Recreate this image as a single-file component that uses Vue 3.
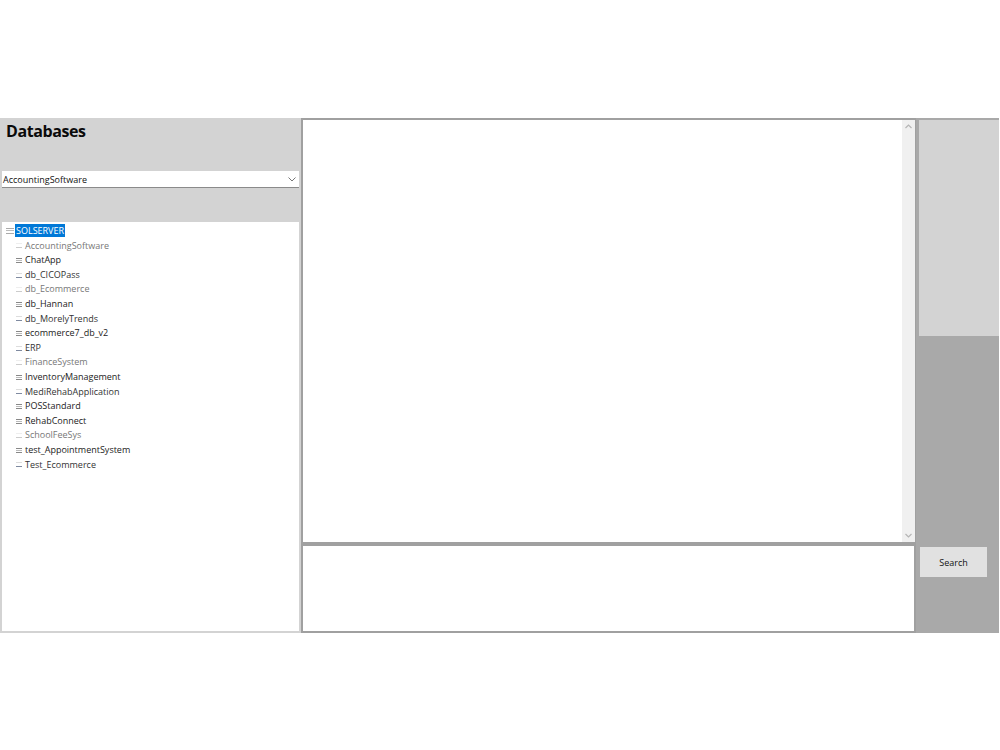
<script setup>
const rows = [
  { name: 'AccountingSoftware', tone: 'faint' },
  { name: 'ChatApp', tone: 'full' },
  { name: 'db_CICOPass', tone: 'low' },
  { name: 'db_Ecommerce', tone: 'faint' },
  { name: 'db_Hannan', tone: 'full' },
  { name: 'db_MorelyTrends', tone: 'low' },
  { name: 'ecommerce7_db_v2', tone: 'full' },
  { name: 'ERP', tone: 'low' },
  { name: 'FinanceSystem', tone: 'faint' },
  { name: 'InventoryManagement', tone: 'full' },
  { name: 'MediRehabApplication', tone: 'low' },
  { name: 'POSStandard', tone: 'full' },
  { name: 'RehabConnect', tone: 'full' },
  { name: 'SchoolFeeSys', tone: 'faint' },
  { name: 'test_AppointmentSystem', tone: 'full' },
  { name: 'Test_Ecommerce', tone: 'low' }
]
</script>

<template>
  <div class="page">
    <div class="window">
      <aside class="left">
        <h1 class="title">Databases</h1>
        <div class="combo">
          <span>AccountingSoftware</span>
          <svg class="chev" width="8" height="5" viewBox="0 0 8 5"><path d="M0.5 0.5L4 4L7.5 0.5" fill="none" stroke="#777" stroke-width="1" /></svg>
        </div>
        <div class="tree">
          <div class="row root">
            <span class="exp"></span>
            <span class="sel">SOLSERVER</span>
          </div>
          <div v-for="r in rows" :key="r.name" class="row child" :class="r.tone">
            <span class="exp"></span>
            <span class="label">{{ r.name }}</span>
          </div>
        </div>
      </aside>
      <main class="center">
        <div class="editor">
          <div class="editor-body"></div>
          <div class="scrollbar">
            <svg width="7" height="5" viewBox="0 0 7 5"><path d="M0.5 4L3.5 1L6.5 4" fill="none" stroke="#b5b5b5" stroke-width="1.2" /></svg>
            <svg width="7" height="5" viewBox="0 0 7 5"><path d="M0.5 1L3.5 4L6.5 1" fill="none" stroke="#b5b5b5" stroke-width="1.2" /></svg>
          </div>
        </div>
        <div class="query"></div>
      </main>
      <aside class="right">
        <div class="right-top"></div>
        <button class="search">Search</button>
      </aside>
    </div>
  </div>
</template>

<style scoped>
.page {
  width: 1000px;
  height: 750px;
  padding: 118px 1px 117px 0;
  box-sizing: border-box;
  background: #fff;
  font-family: "Open Sans", "Noto Sans", sans-serif;
  color: #111;
}
.window {
  display: flex;
  height: 515px;
  background: #a9a9a9;
}
.left {
  width: 301px;
  flex: none;
  box-sizing: border-box;
  padding: 0 2px 2px 2px;
  background: #d3d3d3;
  display: flex;
  flex-direction: column;
}
.title {
  margin: 0;
  padding: 4px 0 0 4px;
  height: 53px;
  box-sizing: border-box;
  font-size: 16px;
  line-height: 18px;
  font-weight: 700;
  letter-spacing: -0.4px;
  color: #0a0a0a;
}
.combo {
  height: 17px;
  box-sizing: border-box;
  background: #fff;
  border-bottom: 1px solid #8a8a8a;
  padding: 1px 3px 0 1px;
  display: flex;
  align-items: center;
  justify-content: space-between;
  font-size: 9px;
}
.tree {
  margin-top: 34px;
  flex: 1;
  background: #fff;
  padding-top: 1.5px;
}
.row {
  height: 14.6px;
  line-height: 14.6px;
  font-size: 9px;
  display: flex;
  align-items: center;
  white-space: nowrap;
}
.root {
  height: 15.1px;
  padding-left: 4px;
  align-items: flex-start;
}
.child {
  padding-left: 14px;
  color: #222;
}
.exp {
  width: 6px;
  height: 5px;
  margin-right: 3px;
  flex: none;
  box-sizing: border-box;
  border-top: 1px solid #888;
  border-bottom: 1px solid #888;
  background: linear-gradient(#bbb, #bbb) center / 100% 1px no-repeat;
}
.low .exp {
  border-top-color: #ddd;
  border-bottom-color: #7f8aa0;
  background: none;
}
.low .label {
  color: #333;
}
.faint .exp {
  border-top-color: #eee;
  border-bottom-color: #ccc;
  background: none;
}
.faint .label {
  color: #777;
}
.root .exp {
  margin-top: 4px;
  margin-right: 1px;
  width: 8px;
  height: 6px;
  border-color: #aaa;
}
.sel {
  margin-top: 0.5px;
  background: #0078d7;
  color: #fff;
  padding: 0 1px;
  line-height: 13px;
  height: 13px;
}
.center {
  width: 615px;
  flex: none;
  display: flex;
  flex-direction: column;
}
.editor {
  height: 426px;
  flex: none;
  box-sizing: border-box;
  display: flex;
  background: #fff;
  border: 2px solid #a0a0a0;
  border-right-width: 1px;
}
.editor-body {
  flex: 1;
}
.scrollbar {
  width: 13px;
  background: #f0f0f0;
  display: flex;
  flex-direction: column;
  justify-content: space-between;
  align-items: center;
  padding: 4px 0;
  box-sizing: border-box;
}
.query {
  flex: 1;
  background: #fff;
  box-sizing: border-box;
  border: 2px solid #a0a0a0;
}
.right {
  flex: 1;
  min-width: 0;
  padding-top: 2px;
}
.right-top {
  height: 216px;
  margin-left: 3px;
  background: #d3d3d3;
}
.search {
  display: block;
  width: 67px;
  height: 30px;
  margin: 211px 0 0 4px;
  padding: 0;
  border: none;
  background: #e1e1e1;
  color: #111;
  font-family: inherit;
  font-size: 9px;
}
</style>
